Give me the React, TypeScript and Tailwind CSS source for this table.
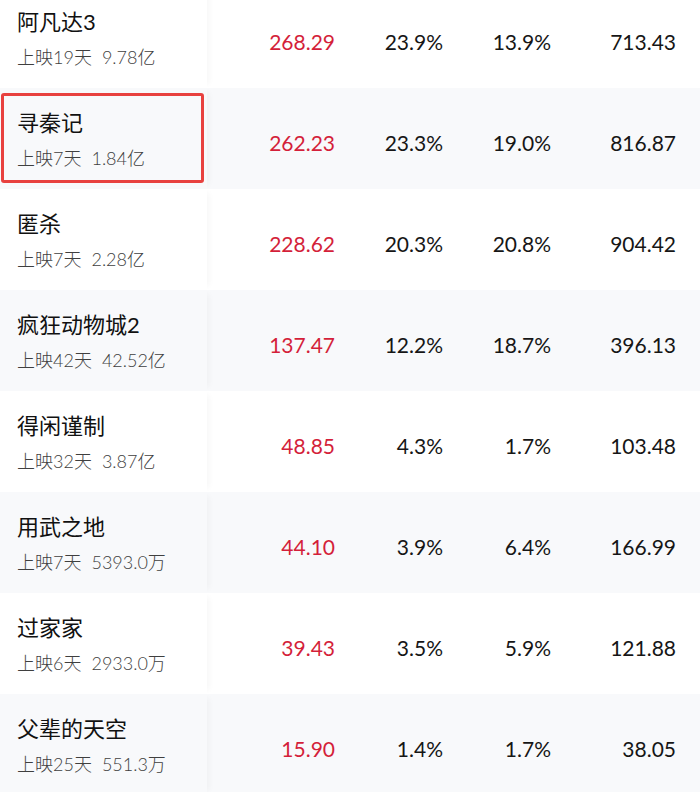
import React from 'react';

interface Film {
  name: string;
  days: string;
  total: string;
  boxOffice: string;
  share: string;
  seats: string;
  avg: string;
}

const films: Film[] = [
  { name: '阿凡达3', days: '上映19天', total: '9.78亿', boxOffice: '268.29', share: '23.9%', seats: '13.9%', avg: '713.43' },
  { name: '寻秦记', days: '上映7天', total: '1.84亿', boxOffice: '262.23', share: '23.3%', seats: '19.0%', avg: '816.87' },
  { name: '匿杀', days: '上映7天', total: '2.28亿', boxOffice: '228.62', share: '20.3%', seats: '20.8%', avg: '904.42' },
  { name: '疯狂动物城2', days: '上映42天', total: '42.52亿', boxOffice: '137.47', share: '12.2%', seats: '18.7%', avg: '396.13' },
  { name: '得闲谨制', days: '上映32天', total: '3.87亿', boxOffice: '48.85', share: '4.3%', seats: '1.7%', avg: '103.48' },
  { name: '用武之地', days: '上映7天', total: '5393.0万', boxOffice: '44.10', share: '3.9%', seats: '6.4%', avg: '166.99' },
  { name: '过家家', days: '上映6天', total: '2933.0万', boxOffice: '39.43', share: '3.5%', seats: '5.9%', avg: '121.88' },
  { name: '父辈的天空', days: '上映25天', total: '551.3万', boxOffice: '15.90', share: '1.4%', seats: '1.7%', avg: '38.05' },
];

const FONT = "font-['Lato','Noto_Sans_CJK_SC',sans-serif]";

export default function App() {
  return (
    <div className={`h-[792px] w-[700px] overflow-hidden bg-white ${FONT}`}>
      <div className="-mt-[13px] flex flex-col">
        {films.map((film, i) => (
          <div
            key={film.name}
            className={`flex h-[101px] items-stretch ${i % 2 === 1 ? 'bg-[#f8f9fb]' : 'bg-white'}`}
          >
            {/* sticky name column */}
            <div className="relative z-10 w-[207px] shrink-0 pl-[17px] pt-[21px] shadow-[6px_0_6px_-4px_rgba(0,0,0,0.04)]">
              <div className="text-[22px] leading-[28px] text-[#111]">{film.name}</div>
              <div className="mt-[9px] flex gap-[10px] text-[18px] font-light leading-[24px] text-[#3f3f3f]">
                <span>{film.days}</span>
                <span>{film.total}</span>
              </div>
              {i === 1 && (
                <div className="absolute left-[1px] right-[3px] top-[5px] bottom-[6px] rounded-[3px] border-[3px] border-[#e8413f]" />
              )}
            </div>

            {/* numbers */}
            <div className="flex items-center pt-[8px] text-[21px] leading-[28px] text-[#161616]">
              <div className="w-[128px] text-right text-[#d41f3a]">{film.boxOffice}</div>
              <div className="w-[108px] text-right">{film.share}</div>
              <div className="w-[108px] text-right">{film.seats}</div>
              <div className="w-[125px] text-right">{film.avg}</div>
            </div>
          </div>
        ))}
      </div>
    </div>
  );
}
